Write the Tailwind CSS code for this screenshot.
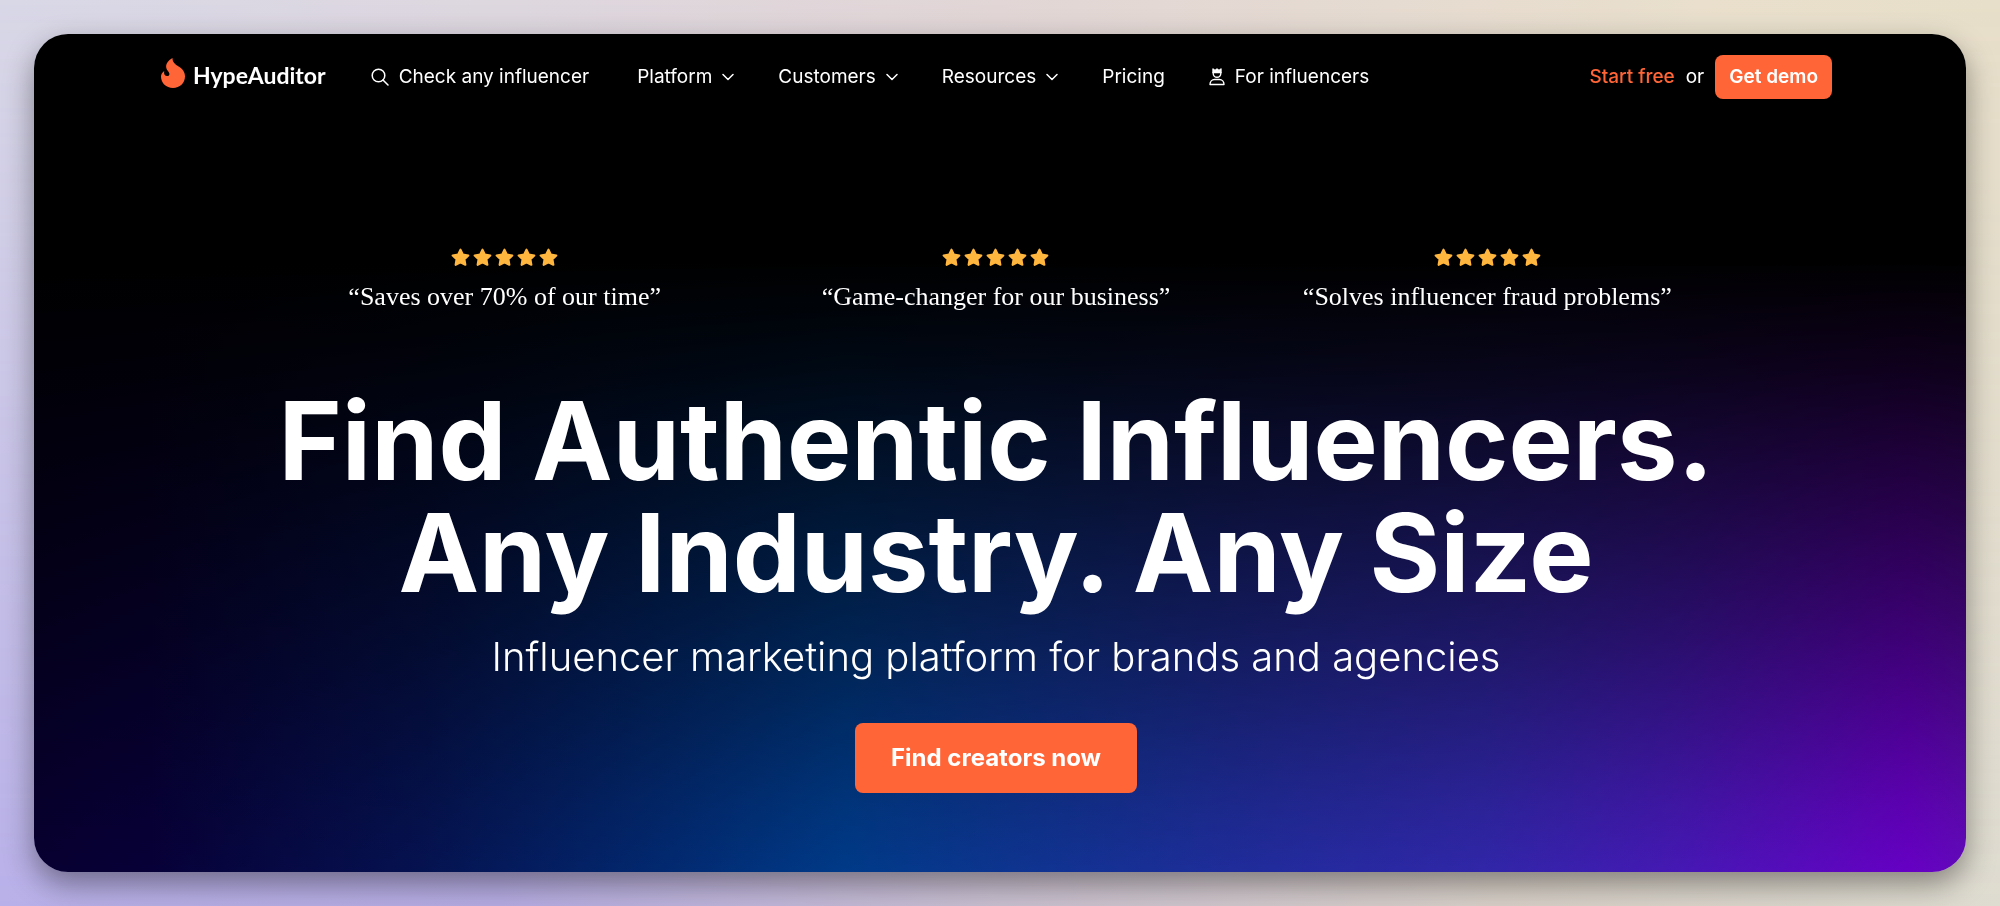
<!DOCTYPE html>
<html lang="en">

<head>
    <meta charset="UTF-8">
    <meta name="viewport" content="width=device-width, initial-scale=1.0">
    <title>HypeAuditor</title>
    <script src="https://cdn.jsdelivr.net/npm/@tailwindcss/browser@4"></script>
</head>

<body class="min-h-screen flex flex-col p-[34px] font-['Inter',sans-serif] text-white bg-[linear-gradient(90deg,#d9d8e7_0%,#e2d6d6_50%,#e9dfcc_85%,#e8dfca_100%)]">
    <svg class="hidden">
        <symbol id="star" viewBox="0 0 18 18">
            <path d="M9 1.600l2.300 4.700 5.100.8-3.700 3.600.9 5.200L9 13.500l-4.600 2.400.9-5.200L1.600 7.100l5.100-.8z" fill="#ffb63f" stroke="#ffb63f" stroke-width="2" stroke-linejoin="round" />
        </symbol>
        <symbol id="chevron" viewBox="0 0 12 8">
            <path d="M1 1.500l5 5 5-5" fill="none" stroke="currentColor" stroke-width="1.500" stroke-linecap="round" stroke-linejoin="round" />
        </symbol>
    </svg>

    <!-- page backdrop, fades to lilac / sand at the bottom -->
    <div class="fixed inset-0 -z-10 bg-[linear-gradient(90deg,#b8b0e8_0%,#b5abe2_25%,#c9bfd0_50%,#d8d0c8_75%,#dedbd0_100%)] mask-[linear-gradient(180deg,transparent,black)]"></div>

    <div class="flex-1 flex flex-col rounded-[34px] overflow-hidden shadow-[0_12px_30px_rgba(0,0,0,0.4)] bg-[linear-gradient(180deg,#000_0%,#000_27%,rgba(0,0,0,0.85)_40%,rgba(0,0,0,0.4)_72%,rgba(0,0,0,0.1)_92%,rgba(0,0,0,0)_100%),linear-gradient(90deg,#070030_0%,#070038_6%,#051250_20%,#003a88_42%,#1f2c9a_62%,#3026a8_75%,#4518b4_85%,#6600c4_97%,#6209bb_100%)]">
        <header class="flex items-center justify-between h-[86px] pl-[127px] pr-[134px] text-[19px]">
            <div class="flex items-center">
                <a href="#" class="flex items-center gap-2 mr-[45px] pb-1 text-[23px] font-bold font-['Lato',sans-serif]">
                    <svg class="w-6 h-[30px] mb-1" viewBox="0 0 24 30" fill="#ff6537">
                        <path d="M11.500 0C7 2.500 4.500 6 5.300 10c.4 2.200 2.500 3.500 3 5.200.5 1.800-.6 3-2.200 2.900-2-.1-3.200-1.600-3-3.500 0-.6.1-1.200.1-1.700C1.200 14.300 0 16.300 0 18.500 0 25 5.200 30 12 30s12-5 12-11.500c0-4.500-2.500-7.500-6-9.700C14 6.200 11.500 4.500 11.500 0z" />
                    </svg>
                    <span>HypeAuditor</span>
                </a>
                <nav class="flex items-center gap-11">
                    <a href="#" class="flex items-center gap-2.5 mr-1">
                        <svg class="size-[18px]" viewBox="0 0 18 18" fill="none" stroke="currentColor" stroke-width="1.500" stroke-linecap="round">
                            <circle cx="7.500" cy="7.500" r="6.300" />
                            <path d="M12 12l5 5" />
                        </svg>
                        Check any influencer
                    </a>
                    <button class="flex items-center gap-2.5">Platform<svg class="w-3 h-2"><use href="#chevron" /></svg></button>
                    <button class="flex items-center gap-2.5">Customers<svg class="w-3 h-2"><use href="#chevron" /></svg></button>
                    <button class="flex items-center gap-2.5">Resources<svg class="w-3 h-2"><use href="#chevron" /></svg></button>
                    <a href="#">Pricing</a>
                    <a href="#" class="flex items-center gap-2.5">
                        <svg class="w-4 h-[18px]" viewBox="0 0 16 18" fill="none" stroke="currentColor" stroke-width="1.400" stroke-linejoin="round">
                            <path d="M4 1l2 1.500L8 1l2 1.500L12 1v3.500H4z" fill="currentColor" />
                            <path d="M4.200 4v1.500a3.800 3.800 0 0 0 7.600 0V4" />
                            <path d="M1 16.500c0-3 2-5 4.500-5h5c2.500 0 4.500 2 4.500 5z" />
                        </svg>
                        For influencers
                    </a>
                </nav>
            </div>
            <div class="flex items-center gap-[11px]">
                <a href="#" class="font-medium text-[#ff6537]">Start free</a>
                <span>or</span>
                <button class="h-11 px-[14px] rounded-lg bg-[#ff6537] font-semibold">Get demo</button>
            </div>
        </header>

        <main class="flex flex-col items-center text-center pt-32 pr-2">
            <div class="grid grid-cols-3 w-full max-w-[1474px] text-[26px] leading-8 font-[Georgia,'Liberation_Serif',serif]">
                <div class="flex flex-col items-center gap-3.5">
                    <div class="flex gap-[3px]">
                        <svg class="size-[19px]"><use href="#star" /></svg>
                        <svg class="size-[19px]"><use href="#star" /></svg>
                        <svg class="size-[19px]"><use href="#star" /></svg>
                        <svg class="size-[19px]"><use href="#star" /></svg>
                        <svg class="size-[19px]"><use href="#star" /></svg>
                    </div>
                    <p>“Saves over 70% of our time”</p>
                </div>
                <div class="flex flex-col items-center gap-3.5">
                    <div class="flex gap-[3px]">
                        <svg class="size-[19px]"><use href="#star" /></svg>
                        <svg class="size-[19px]"><use href="#star" /></svg>
                        <svg class="size-[19px]"><use href="#star" /></svg>
                        <svg class="size-[19px]"><use href="#star" /></svg>
                        <svg class="size-[19px]"><use href="#star" /></svg>
                    </div>
                    <p>“Game-changer for our business”</p>
                </div>
                <div class="flex flex-col items-center gap-3.5">
                    <div class="flex gap-[3px]">
                        <svg class="size-[19px]"><use href="#star" /></svg>
                        <svg class="size-[19px]"><use href="#star" /></svg>
                        <svg class="size-[19px]"><use href="#star" /></svg>
                        <svg class="size-[19px]"><use href="#star" /></svg>
                        <svg class="size-[19px]"><use href="#star" /></svg>
                    </div>
                    <p>“Solves influencer fraud problems”</p>
                </div>
            </div>
            <h1 class="mt-[72px] text-[108px] leading-[112px] font-bold">Find Authentic Influencers.<br>Any Industry. Any Size</h1>
            <p class="mt-5 text-[40px] leading-[56px] font-light">Influencer marketing platform for brands and agencies</p>
            <button class="mt-[38px] mb-[72px] h-[70px] px-9 rounded-lg bg-[#ff6537] text-[24px] font-bold">Find creators now</button>
        </main>
    </div>
</body>

</html>
